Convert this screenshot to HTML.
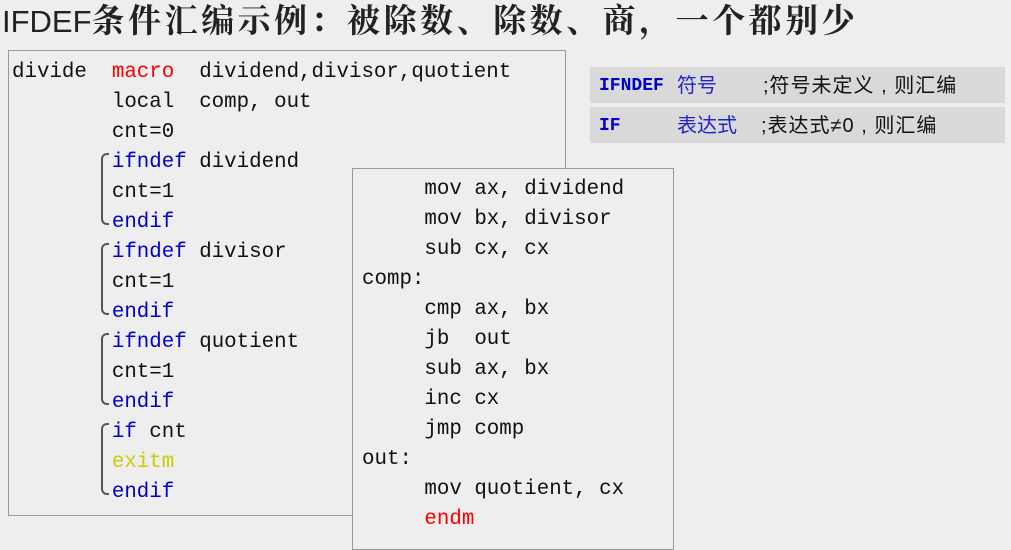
<!DOCTYPE html>
<html><head><meta charset="utf-8"><style>
body{margin:0;width:1011px;height:542px;background:#eeeeee;position:relative;overflow:hidden}
.t{position:absolute;left:2px;top:-5px;font-size:32px;white-space:nowrap;color:#222}
.t .a{font-family:"Liberation Sans",sans-serif;font-size:31px}
.t .b{font-family:"Noto Serif CJK SC","Noto Sans CJK SC",serif;font-weight:bold;font-size:33px;letter-spacing:3.5px}
.box{position:absolute;border:1.5px solid #999;background:#eeeeee}
pre{margin:0;font-family:"Liberation Mono",monospace;font-size:20.8px;line-height:30px;color:#111}
.r{color:#f00}.bl{color:#00c}.y{color:#cc0}
.br{position:absolute;left:101px;width:6px;border:2px solid #555;border-right:none;border-radius:6px 0 0 6px}
.row{position:absolute;left:590px;width:415px;height:36px;background:#d9d9d9;font-size:20px;line-height:38px;white-space:nowrap}
.row span{position:absolute}
.m{font-family:"Liberation Mono",monospace;font-weight:bold;color:#00c;font-size:18px}
.c{font-family:"Liberation Sans","Noto Sans CJK SC",sans-serif}
</style></head><body>
<div class="t"><span class="a">IFDEF</span><span class="b">条件汇编示例：被除数、除数、商，一个都别少</span></div>
<div class="box" style="left:8px;top:50px;width:556px;height:464px">
<pre style="position:absolute;left:3px;top:7px">divide  <span class="r">macro</span>  dividend,divisor,quotient
        local  comp, out
        cnt=0
        <span class="bl">ifndef</span> dividend
        cnt=1
        <span class="bl">endif</span>
        <span class="bl">ifndef</span> divisor
        cnt=1
        <span class="bl">endif</span>
        <span class="bl">ifndef</span> quotient
        cnt=1
        <span class="bl">endif</span>
        <span class="bl">if</span> cnt
        <span class="y">exitm</span>
        <span class="bl">endif</span></pre></div>
<div class="br" style="top:153px;height:68px"></div>
<div class="br" style="top:243px;height:68px"></div>
<div class="br" style="top:333px;height:68px"></div>
<div class="br" style="top:423px;height:68px"></div>
<div class="box" style="left:352px;top:168px;width:320px;height:380px">
<pre style="position:absolute;left:9px;top:6px">     mov ax, dividend
     mov bx, divisor
     sub cx, cx
comp:
     cmp ax, bx
     jb  out
     sub ax, bx
     inc cx
     jmp comp
out:
     mov quotient, cx
     <span class="r">endm</span></pre></div>
<div class="row" style="top:67px"><span class="m" style="left:9px">IFNDEF</span><span class="c" style="left:87px;color:#22c">符号</span><span class="c" style="left:173px;color:#111;letter-spacing:1px">;符号未定义 , 则汇编</span></div>
<div class="row" style="top:107px"><span class="m" style="left:9px">IF</span><span class="c" style="left:87px;color:#22c">表达式</span><span class="c" style="left:171px;color:#111;letter-spacing:1px">;表达式≠0 , 则汇编</span></div>
</body></html>
